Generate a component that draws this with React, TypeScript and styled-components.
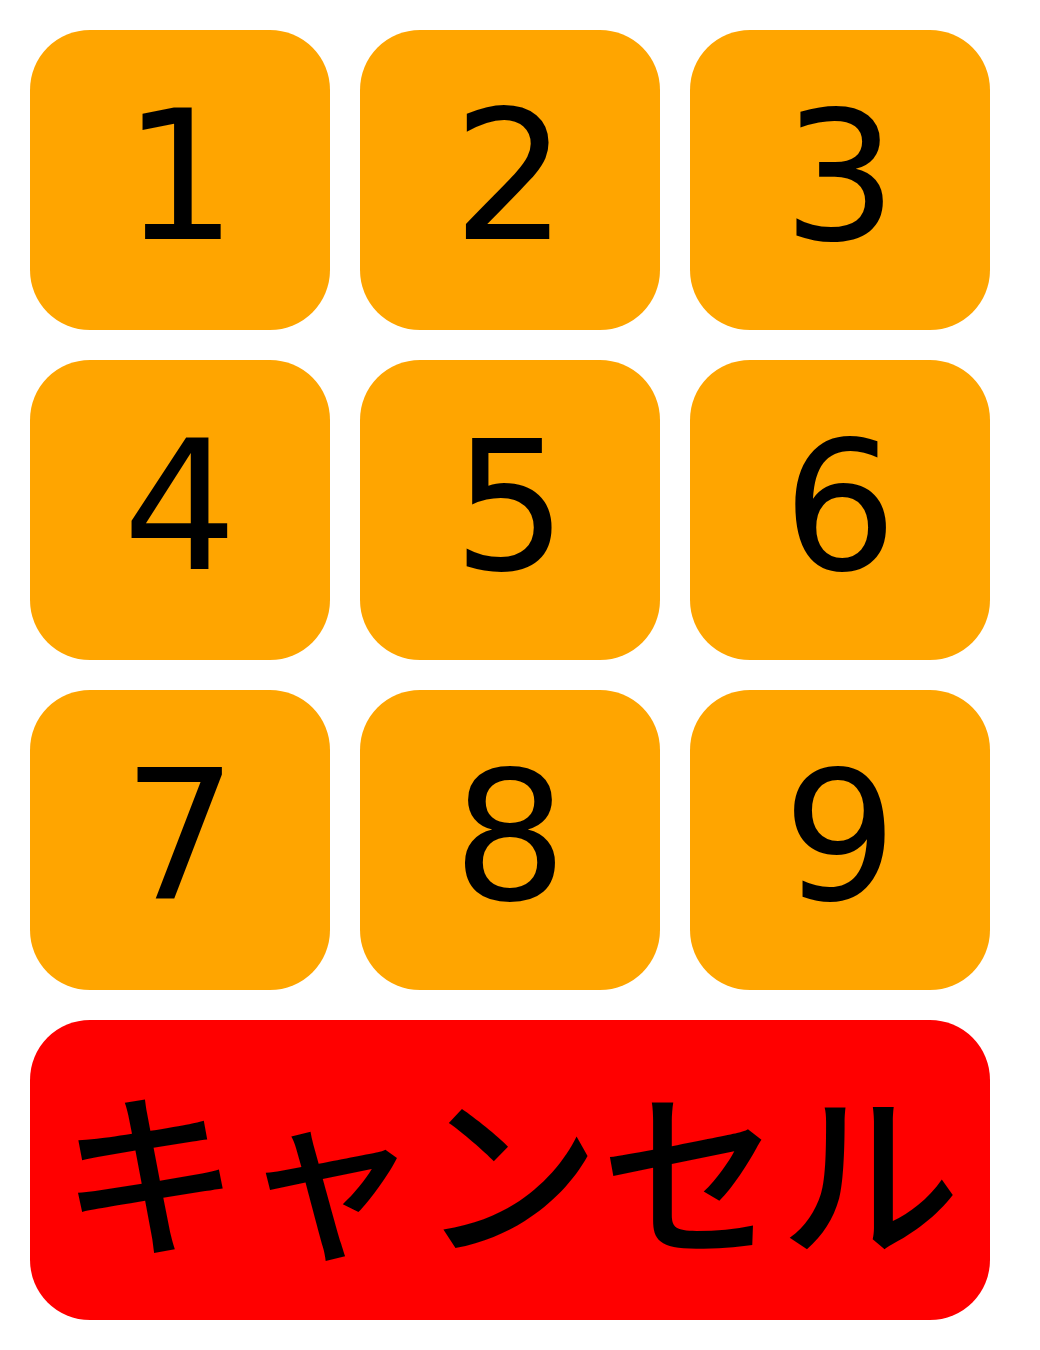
import React from "react";
import styled, { createGlobalStyle } from "styled-components";

const GlobalStyle = createGlobalStyle`
  html, body {
    margin: 0;
    padding: 0;
    background: #ffffff;
  }
  body {
    font-family: "DejaVu Sans", sans-serif;
  }
`;

const Pad = styled.div`
  display: grid;
  grid-template-columns: repeat(3, 300px);
  grid-auto-rows: 300px;
  gap: 30px;
  padding: 30px;
  width: 960px;
`;

const Key = styled.button<{ $variant?: "digit" | "cancel" }>`
  display: flex;
  align-items: center;
  justify-content: center;
  border: none;
  margin: 0;
  padding: ${(p) => (p.$variant === "cancel" ? "0 0 10px 0" : "0 0 6px 0")};
  border-radius: 60px;
  background: ${(p) => (p.$variant === "cancel" ? "#ff0000" : "#ffa500")};
  color: #000000;
  font-family: ${(p) =>
    p.$variant === "cancel"
      ? '"Noto Sans CJK JP", sans-serif'
      : '"DejaVu Sans", sans-serif'};
  font-weight: ${(p) => (p.$variant === "cancel" ? 500 : 400)};
  font-size: 180px;
  line-height: 1.164;
  grid-column: ${(p) => (p.$variant === "cancel" ? "1 / -1" : "auto")};
  cursor: pointer;
`;

export default function App() {
  const digits = ["1", "2", "3", "4", "5", "6", "7", "8", "9"];
  return (
    <>
      <GlobalStyle />
      <Pad>
        {digits.map((d) => (
          <Key key={d} $variant="digit">
            {d}
          </Key>
        ))}
        <Key $variant="cancel">キャンセル</Key>
      </Pad>
    </>
  );
}
